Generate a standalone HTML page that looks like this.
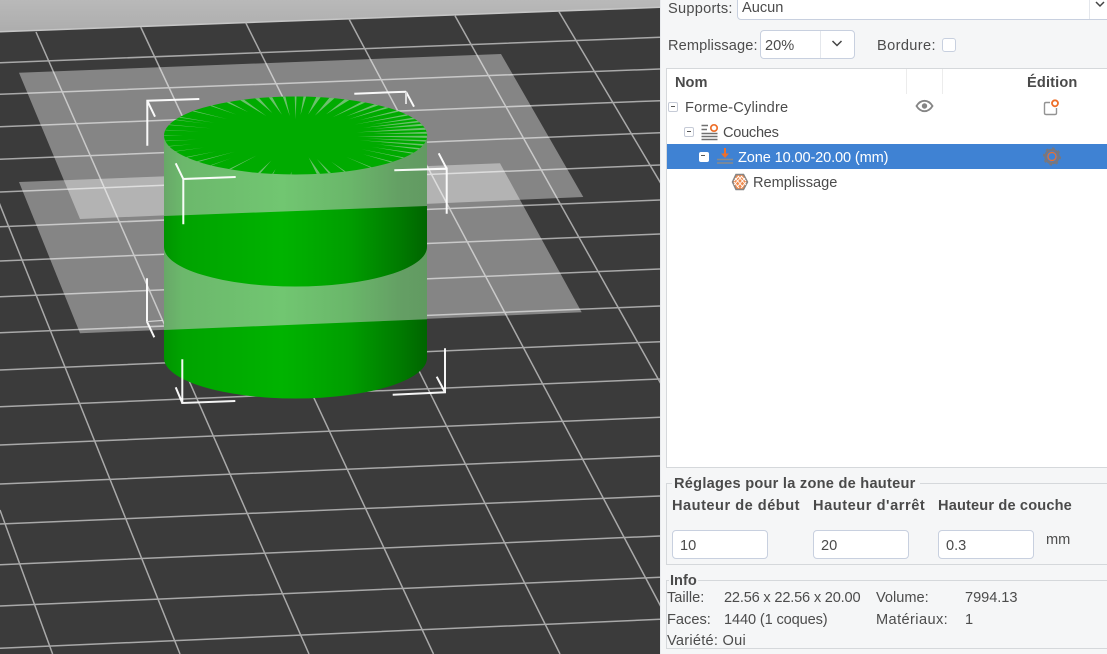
<!DOCTYPE html>
<html><head><meta charset="utf-8">
<style>
html,body{margin:0;padding:0;width:1107px;height:654px;overflow:hidden;background:#f5f6f7}
body{position:relative;font-family:"Liberation Sans",sans-serif;font-size:14.6px;color:#4c4c4c}
.t{position:absolute;white-space:nowrap;line-height:18px}
.b{font-weight:bold;color:#4a4a4a}
.box{position:absolute;box-sizing:border-box;background:#fff;border:1px solid #c8d0df;border-radius:4px}
.ln{position:absolute;background:#d5d8db}
.exp{position:absolute;box-sizing:border-box;width:10px;height:10px;border:1px solid #c5cad6;border-radius:2px;background:#fff}
.exp:after{content:"";position:absolute;left:2px;top:3px;width:4px;height:1px;background:#555}
svg{position:absolute;overflow:hidden}
</style></head><body>
<svg style="left:0;top:0" width="660" height="654" viewBox="0 0 660 654">
<defs>
<linearGradient id="sky" x1="0" y1="0" x2="0" y2="1"><stop offset="0" stop-color="#b9b9b9"/><stop offset="1" stop-color="#adadad"/></linearGradient>
<linearGradient id="g" gradientUnits="userSpaceOnUse" x1="164" y1="0" x2="427" y2="0"><stop offset="0" stop-color="#009400"/><stop offset=".07" stop-color="#00a300"/><stop offset=".45" stop-color="#00b300"/><stop offset=".7" stop-color="#009e00"/><stop offset=".9" stop-color="#007a00"/><stop offset="1" stop-color="#006500"/></linearGradient>
<linearGradient id="w" gradientUnits="userSpaceOnUse" x1="164" y1="0" x2="427" y2="0"><stop offset="0" stop-color="#68a868"/><stop offset=".07" stop-color="#6cb86c"/><stop offset=".45" stop-color="#71c671"/><stop offset=".7" stop-color="#6ab76a"/><stop offset=".9" stop-color="#649f64"/><stop offset="1" stop-color="#629a62"/></linearGradient>
<clipPath id="c"><circle r="131.6"/></clipPath>
</defs>
<rect width="660" height="654" fill="#3b3b3b"/>
<polygon points="0,0 660,0 660,7.300 0,31.700" fill="url(#sky)"/>
<g stroke="#a9a9a9" stroke-width="1.5" fill="none">
<path stroke="#c6c6c6" d="M0 31.700L660 7.300"/>
<path d="M0 62.700L660 37.300M0 94.300L660 69M0 126.700L660 100.700M0 159.300L660 132.700M0 192L660 165M0 226.700L660 200M0 261L660 234M0 296.700L660 269M0 332.700L660 306M0 370L660 341.700M0 406.700L660 379M0 445L660 417.300M0 484L660 456M0 524L660 496M0 564.700L660 536M0 606L660 577.300M0 648.300L660 619.300"/>
<path d="M0 510L52.600 654M-10 180L180 654M36 32L309 654M140.700 27L433.500 654M245.700 22.700L560 654M349 19L686 654M455 15.700L812 654M559 11.700L940 654"/>
</g>
<g fill="#fff" fill-opacity=".38">
<polygon points="19,72.700 501,54 583.300,197 80,219"/>
<polygon points="19,182 500,163.300 581.700,312.300 80,333.300"/>
</g>
<path d="M164 135V358A131.500 40.500 0 0 0 427 358V135z" fill="url(#g)"/>
<path d="M164 135V216L427 206V135z" fill="url(#w)"/>
<path d="M164 247A131.500 39.500 0 0 0 427 247V319.300L164 330z" fill="url(#w)"/>
<ellipse cx="295.600" cy="135.500" rx="131.600" ry="39" fill="#00ab00"/>
<g transform="translate(295.600 135.500) scale(1 .296)"><g clip-path="url(#c)" fill="#6cc06c">
<path transform="rotate(-90)" d="M55 0L140-1V1z"/><path transform="rotate(-86)" d="M70 0L140-1.500V1.500z"/><path transform="rotate(-95)" d="M66 0L140-1.500V1.500z"/><path transform="rotate(-80)" d="M72 0L140-2.500V2.500z"/><path transform="rotate(-101)" d="M72 0L140-2V2z"/><path transform="rotate(-107)" d="M80 0L140-2.500V2.500z"/><path transform="rotate(-74)" d="M70 0L140-3V3z"/><path transform="rotate(-67)" d="M78 0L140-3V3z"/><path transform="rotate(-114)" d="M72 0L140-2.500V2.500z"/><path transform="rotate(-121)" d="M92 0L140-2V2z"/><path transform="rotate(-59)" d="M72 0L140-2.500V2.500z"/><path transform="rotate(-52)" d="M82 0L140-3V3z"/><path transform="rotate(-46)" d="M76 0L140-2.500V2.500z"/><path transform="rotate(-130)" d="M92 0L140-1.500V1.500z"/><path transform="rotate(-141)" d="M88 0L140-1.500V1.500z"/><path transform="rotate(-152)" d="M92 0L140-1.500V1.500z"/>
<path transform="rotate(-39)" d="M82 0L140-2.500V2.500z"/><path transform="rotate(-32)" d="M70 0L140-2.500V2.500z"/><path transform="rotate(-26)" d="M85 0L140-3V3z"/><path transform="rotate(-21)" d="M72 0L140-3V3z"/><path transform="rotate(-16)" d="M80 0L140-4V4z"/><path transform="rotate(-10)" d="M62 0L140-4V4z"/><path transform="rotate(-4)" d="M78 0L140-4V4z"/><path transform="rotate(2)" d="M62 0L140-4V4z"/><path transform="rotate(8)" d="M72 0L140-3V3z"/><path transform="rotate(14)" d="M66 0L140-3V3z"/><path transform="rotate(20)" d="M85 0L140-3V3z"/><path transform="rotate(27)" d="M85 0L140-2V2z"/><path transform="rotate(35)" d="M80 0L140-1.500V1.500z"/><path transform="rotate(43)" d="M92 0L140-1.500V1.500z"/><path transform="rotate(55)" d="M88 0L140-1V1z"/><path transform="rotate(68)" d="M95 0L140-1V1z"/><path transform="rotate(75)" d="M82 0L140-1.500V1.500z"/><path transform="rotate(80)" d="M75 0L140-2V2z"/><path transform="rotate(92)" d="M122 0L140-.8V.8z"/><path transform="rotate(106)" d="M88 0L140-1.500V1.500z"/><path transform="rotate(100)" d="M115 0L140-.8V.8z"/><path transform="rotate(120)" d="M78 0L140-1.200V1.200z"/><path transform="rotate(130)" d="M100 0L140-.8V.8z"/><path transform="rotate(138)" d="M82 0L140-1.500V1.500z"/><path transform="rotate(146)" d="M96 0L140-1.200V1.200z"/>
<path transform="rotate(156)" d="M100 0L140-1V1z"/><path transform="rotate(164)" d="M108 0L140-1V1z"/><path transform="rotate(172)" d="M100 0L140-1V1z"/><path transform="rotate(180)" d="M112 0L140-1V1z"/><path transform="rotate(188)" d="M98 0L140-1V1z"/><path transform="rotate(196)" d="M88 0L140-1.200V1.200z"/><path transform="rotate(204)" d="M100 0L140-1.200V1.200z"/>
</g></g>
<g stroke="#fff" stroke-width="2" fill="none" stroke-opacity=".95">
<path d="M199.300 99L147.300 100.700V145.700M147.300 100.700L155 116.700"/>
<path d="M235.700 177L183.300 179V224.300M183.300 179L175.700 163.300"/>
<path d="M354.300 93.700L406 91.700M406 91.700L414 106.700"/>
<path d="M394.300 170.300L446.700 168.700V213.700M446.700 168.700L438.700 153.300"/>
<path d="M147 321.700V278.300M147 321.700L154.300 337.300"/>
<path d="M235.300 401L182.300 403V359.300M182.300 403L175.700 387.300"/>
<path d="M392.700 394.700L445 392.300V348.300M445 392.300L436.700 376.700"/>
</g>
<path d="M406 92V104" stroke="#dcdcdc" stroke-width="2"/>
<path d="M147 321.500L163 320.500" stroke="#e2e2e2" stroke-width="1"/>
</svg>
<div style="position:absolute;left:660px;top:0;width:447px;height:654px;background:#f5f6f7;border-left:1px solid #e9ebee;box-sizing:border-box"></div>

<div class="t" style="left:668px;top:0px;letter-spacing:.25px">Supports:</div>
<div class="box" style="left:737px;top:-6px;width:380px;height:26px"></div>
<div class="t" style="left:742px;top:-1px">Aucun</div>
<div class="ln" style="left:1089px;top:0;width:1px;height:19px;background:#e4e7ec"></div>
<svg style="left:1095px;top:0" width="12" height="12"><path d="M1 2L5 6L9 2" fill="none" stroke="#444" stroke-width="1.5"/></svg>

<div class="t" style="left:668px;top:37px;letter-spacing:.1px">Remplissage:</div>
<div class="box" style="left:760px;top:30px;width:95px;height:29px"></div>
<div class="t" style="left:765px;top:37px">20%</div>
<div class="ln" style="left:820px;top:31px;width:1px;height:27px;background:#e4e7ec"></div>
<svg style="left:831px;top:39px" width="12" height="10"><path d="M1.500 2L6 6.500L10.500 2" fill="none" stroke="#444" stroke-width="1.5"/></svg>
<div class="t" style="left:877px;top:37px;letter-spacing:.37px">Bordure:</div>
<div class="box" style="left:942px;top:38px;width:14px;height:14px;border-radius:3px"></div>

<div style="position:absolute;left:666px;top:68px;width:441px;height:400px;background:#fff;border:1px solid #d5d8db;border-right:0;box-sizing:border-box"></div>
<div class="ln" style="left:906px;top:69px;width:1px;height:25px;background:#ececec"></div>
<div class="ln" style="left:942px;top:69px;width:1px;height:25px;background:#ececec"></div>
<div class="t b" style="left:675px;top:74px">Nom</div>
<div class="t b" style="left:1027px;top:74px;letter-spacing:.15px">Édition</div>

<div class="exp" style="left:668px;top:102px"></div>
<div class="t" style="left:685px;top:99px;letter-spacing:.2px">Forme-Cylindre</div>
<svg style="left:915px;top:99px" width="20" height="14" viewBox="0 0 20 14"><path d="M1.500 7C4 3 6.500 1.800 9.500 1.800S15 3 17.500 7C15 11 12.500 12.200 9.500 12.200S4 11 1.500 7z" fill="none" stroke="#858585" stroke-width="1.800"/><circle cx="9.500" cy="7" r="2.700" fill="#858585"/></svg>
<svg style="left:1042px;top:98px" width="20" height="20" viewBox="0 0 20 20"><path d="M8 4.500H4Q2.500 4.500 2.500 6V15Q2.500 16.500 4 16.500H13Q14.500 16.500 14.500 15V10" fill="none" stroke="#939393" stroke-width="1.400"/><circle cx="13" cy="5.300" r="3" fill="#fff" stroke="#ee6f2a" stroke-width="1.800"/></svg>

<div class="exp" style="left:684px;top:127px"></div>
<svg style="left:700px;top:123px" width="20" height="18" viewBox="0 0 20 18"><path d="M1.500 2.500H8M1.500 6.500H7M1.500 10.500H17.500M1.500 13.500H17.500M1.500 16.500H17.500" stroke="#707070" stroke-width="1.600"/><circle cx="14" cy="5" r="3.200" fill="#fff" stroke="#ee6f2a" stroke-width="1.700"/></svg>
<div class="t" style="left:723px;top:124px;letter-spacing:-.28px">Couches</div>

<div style="position:absolute;left:667px;top:144px;width:440px;height:25px;background:#3f82d3"></div>
<div class="exp" style="left:699px;top:152px;border:0;background:#fff"></div>
<svg style="left:716px;top:147px" width="18" height="19" viewBox="0 0 18 19"><path d="M9 1V8" stroke="#ee6f2a" stroke-width="2"/><path d="M5 6.500L9 11L13 6.500z" fill="#ee6f2a"/><path d="M1 12.500H17M1 16H17" stroke="#8a8a8a" stroke-width="1.600"/></svg>
<div class="t" style="left:738px;top:149px;color:#fff;letter-spacing:-.14px">Zone 10.00-20.00 (mm)</div>
<svg style="left:1042px;top:147px" width="20" height="20" viewBox="0 0 20 20"><circle cx="10" cy="9.500" r="6.500" fill="none" stroke="#77777f" stroke-width="2.400"/><circle cx="10" cy="9.500" r="8.200" fill="none" stroke="#77777f" stroke-width="1.800" stroke-dasharray="2.600 3.800"/><circle cx="10" cy="9.500" r="4" fill="none" stroke="#ee6f2a" stroke-width="1.200"/></svg>

<svg style="left:731px;top:173px" width="18" height="18" viewBox="0 0 18 18"><path d="M5 1.500H12.500L16.500 9L12.500 16.500H5L1.500 9z" fill="#f08c50" stroke="#858585" stroke-width="1.500"/><path d="M4 5L12 14M7 3L15 12M3 9L8 15M10 3L15 8M14 5L6 14M11 3L3 12M15 9L10 15M8 3L3 8" stroke="#fff" stroke-width=".9"/></svg>
<div class="t" style="left:753px;top:174px">Remplissage</div>

<div class="ln" style="left:666px;top:483px;width:441px;height:1px"></div>
<div class="ln" style="left:666px;top:483px;width:1px;height:82px"></div>
<div class="ln" style="left:666px;top:564px;width:441px;height:1px"></div>
<div class="t b" style="left:672px;top:475px;background:#f5f6f7;padding:0 4px 0 2px;letter-spacing:.25px">Réglages pour la zone de hauteur</div>
<div class="t b" style="left:672px;top:497px;letter-spacing:.5px">Hauteur de début</div>
<div class="t b" style="left:813px;top:497px;letter-spacing:.55px">Hauteur d'arrêt</div>
<div class="t b" style="left:938px;top:497px;letter-spacing:.15px">Hauteur de couche</div>
<div class="box" style="left:672px;top:530px;width:96px;height:29px"></div>
<div class="t" style="left:680px;top:537px">10</div>
<div class="box" style="left:813px;top:530px;width:96px;height:29px"></div>
<div class="t" style="left:821px;top:537px">20</div>
<div class="box" style="left:938px;top:530px;width:96px;height:29px"></div>
<div class="t" style="left:946px;top:537px">0.3</div>
<div class="t" style="left:1046px;top:531px">mm</div>

<div class="ln" style="left:666px;top:580px;width:441px;height:1px"></div>
<div class="ln" style="left:666px;top:580px;width:1px;height:68px"></div>
<div class="ln" style="left:666px;top:648px;width:441px;height:1px"></div>
<div class="t b" style="left:669px;top:572px;background:#f5f6f7;padding:0 1px">Info</div>
<div class="t" style="left:667px;top:589px">Taille:</div>
<div class="t" style="left:724px;top:589px;letter-spacing:-.19px">22.56 x 22.56 x 20.00</div>
<div class="t" style="left:876px;top:589px">Volume:</div>
<div class="t" style="left:965px;top:589px;letter-spacing:-.05px">7994.13</div>
<div class="t" style="left:667px;top:611px">Faces:</div>
<div class="t" style="left:724px;top:611px;letter-spacing:-.13px">1440 (1 coques)</div>
<div class="t" style="left:876px;top:611px;letter-spacing:.4px">Matériaux:</div>
<div class="t" style="left:965px;top:611px">1</div>
<div class="t" style="left:667px;top:632px;letter-spacing:.25px">Variété: Oui</div>
</body></html>
